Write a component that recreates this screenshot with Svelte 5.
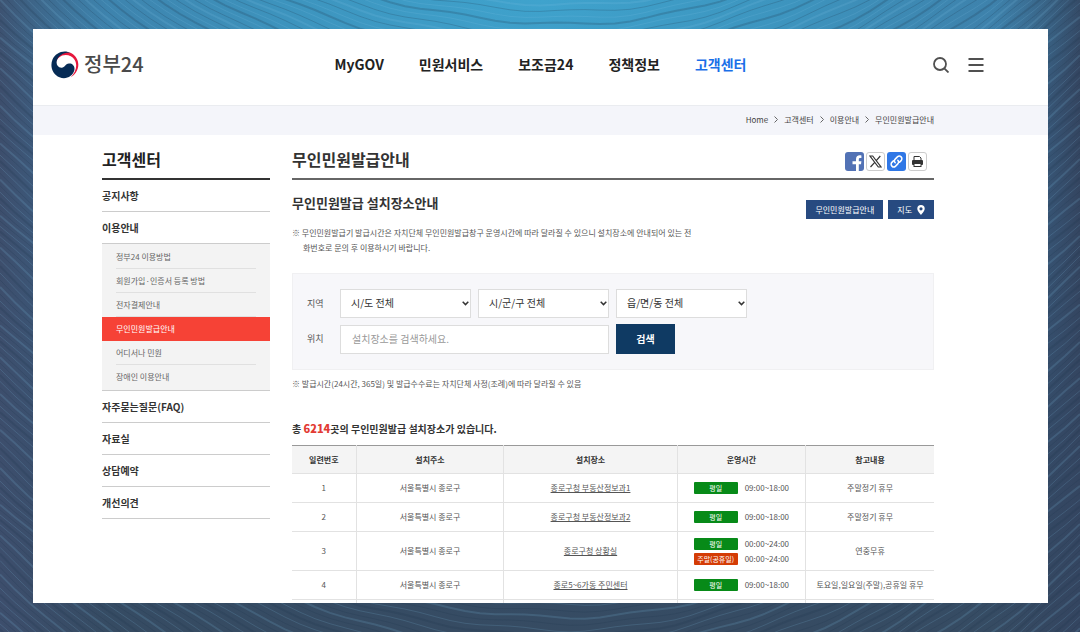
<script>
  const nav = ['MyGOV', '민원서비스', '보조금24', '정책정보', '고객센터'];
  const crumbs = ['Home', '고객센터', '이용안내', '무인민원발급안내'];
  const guide = ['정부24 이용방법', '회원가입·인증서 등록 방법', '전자결제안내', '무인민원발급안내', '어디서나 민원', '장애인 이용안내'];
  const menu = [
    { label: '공지사항' },
    { label: '이용안내', children: guide },
    { label: '자주묻는질문(FAQ)' },
    { label: '자료실' },
    { label: '상담예약' },
    { label: '개선의견' }
  ];
  const regions = [
    { name: '시/도', text: '시/도 전체' },
    { name: '시/군/구', text: '시/군/구 전체' },
    { name: '읍/면/동', text: '읍/면/동 전체' }
  ];
  const heads = ['일련번호', '설치주소', '설치장소', '운영시간', '참고내용'];
  const rows = [
    { no: 1, place: '종로구청 부동산정보과1', hours: [['평일', '09:00~18:00']], memo: '주말정기 휴무' },
    { no: 2, place: '종로구청 부동산정보과2', hours: [['평일', '09:00~18:00']], memo: '주말정기 휴무' },
    { no: 3, place: '종로구청 상황실', hours: [['평일', '00:00~24:00'], ['주말(공휴일)', '00:00~24:00']], memo: '연중무휴' },
    { no: 4, place: '종로5~6가동 주민센터', hours: [['평일', '09:00~18:00']], memo: '토요일,일요일(주말),공휴일 휴무' }
  ];
  // Grooves of the backdrop: nested bowls with a slight ripple.
  const grooves = Array.from({ length: 190 }, (_, i) => {
    const y = -460 + i * 6;
    let d = '';
    for (let x = 0; x <= 1080; x += 15) {
      const t = (x - 550) / 540;
      const py = y + 250 * (1 - t * t) + 1.5 * Math.sin(x / 17 + i * 0.4) + 2 * Math.sin(x / 61 + i * 0.25);
      d += (x ? 'L' : 'M') + x + ' ' + py.toFixed(1);
    }
    return d;
  });
</script>

<div class="backdrop">
  <svg class="texture" viewBox="0 0 1080 632" preserveAspectRatio="none" aria-hidden="true">
    {#each grooves as d, i}
      <path {d} fill="none" stroke={i % 2 ? '#20364f' : '#80c6e6'} stroke-opacity={i % 2 ? 0.22 : 0.17} stroke-width={i % 3 ? 1 : 2} />
    {/each}
  </svg>

  <div class="sheet">
    <header>
      <a class="logo" href="#home">
        <svg width="28" height="28" viewBox="0 0 28 28" aria-hidden="true">
          <path d="M3 8.5C6 1.800 14-1 20.500 2.200c7 3.700 9 13 4.200 19.500-1.200 1.800-3 3.400-5 4.500 5-4.800 7.200-11.800 4-17.200C20.500 3.400 12.500 2.400 8 6.500 6 8.300 5 10 5 12z" fill="#e6173c" />
          <path d="M20 2C13-1.800 4.500 1.500 1.500 8.500-1.500 16 2 23.500 8.500 26.300c6.500 2.500 13-.8 14.700-6.500 1.300-4.600-1.700-7.600-5.200-7.300-4.200.4-4 4.500-7.700 4.200-3.800-.3-5.600-3.900-4.300-7.600C8 3.600 14 .9 20 2z" fill="#062b55" />
        </svg>
        <span>정부24</span>
      </a>
      <nav aria-label="주메뉴">
        {#each nav as item, i}
          <a href="#menu" class:current={i === 4}>{item}</a>
        {/each}
      </nav>
      <div class="tools">
        <button aria-label="검색창 열기">
          <svg width="16" height="16" viewBox="0 0 16 16" fill="none" stroke="#505050" stroke-width="1.800"><circle cx="7" cy="7" r="6" /><path d="M11.300 11.300L15.500 15.500" /></svg>
        </button>
        <button aria-label="전체메뉴">
          <svg width="16" height="16" viewBox="0 0 16 16" fill="none" stroke="#505050" stroke-width="1.800"><path d="M.5 2h15M.5 8h15M.5 14h15" /></svg>
        </button>
      </div>
    </header>

    <div class="crumbs">
      {#each crumbs as c, i}
        {#if i}<svg width="4" height="7" viewBox="0 0 4 7" fill="none" stroke="#666" aria-hidden="true"><path d="M.5.5l3 3-3 3" /></svg>{/if}
        <a href="#crumb">{c}</a>
      {/each}
    </div>

    <div class="body">
      <aside>
        <h2>고객센터</h2>
        <ul class="menu">
          {#each menu as m}
            <li>
              <a href="#section">{m.label}</a>
              {#if m.children}
                <ul class="sub">
                  {#each m.children as s, i}
                    <li class:active={i === 3}><a href="#page">{s}</a></li>
                  {/each}
                </ul>
              {/if}
            </li>
          {/each}
        </ul>
      </aside>

      <main>
        <div class="title">
          <h1>무인민원발급안내</h1>
          <div class="share">
            <button class="fb" aria-label="페이스북">
              <svg width="19" height="19" viewBox="0 0 19 19"><path d="M11 19v-6.800H7.500V9.200H11V7.300C11 4.700 12.400 3.200 14.800 3.200c.8 0 1.300.1 1.600.2v2.700h-1.200c-1.100 0-1.400.6-1.400 1.400v1.700h2.600l-.4 3h-2.200V19z" fill="#fff" /></svg>
            </button>
            <button class="plain" aria-label="X">
              <svg width="17" height="17" viewBox="0 0 17 17" fill="none" stroke="#333"><path d="M3 3h2.700l8.300 11h-2.700zM13.300 3L9.300 7.600M7.500 9.600L3.500 14" stroke-width="1.200" /></svg>
            </button>
            <button class="link" aria-label="링크 복사">
              <svg width="19" height="19" viewBox="0 0 19 19" fill="none" stroke="#fff" stroke-width="1.500" stroke-linecap="round"><path d="M8.200 10.800a2.600 2.600 0 0 1 0-3.700l2.200-2.200a2.600 2.600 0 0 1 3.700 3.700l-1.500 1.500M10.800 8.200a2.600 2.600 0 0 1 0 3.700l-2.200 2.200a2.600 2.600 0 0 1-3.700-3.700l1.500-1.500" /></svg>
            </button>
            <button class="plain" aria-label="인쇄">
              <svg width="17" height="17" viewBox="0 0 17 17"><path d="M5 7V3.500h5.500L12 5v2" fill="#fff" stroke="#333" /><rect x="3" y="7" width="11" height="5" rx="1" fill="#333" /><rect x="5" y="10.500" width="7" height="3" fill="#fff" stroke="#333" /></svg>
            </button>
          </div>
        </div>

        <div class="subtitle">
          <h3>무인민원발급 설치장소안내</h3>
          <div class="links">
            <a href="#guide">무인민원발급안내</a>
            <a href="#map">지도 <svg width="8" height="10" viewBox="0 0 8 10" aria-hidden="true"><path fill-rule="evenodd" d="M4 0a3.700 3.700 0 0 1 3.700 3.800C7.700 6.200 4 10 4 10S.3 6.200.3 3.800A3.700 3.700 0 0 1 4 0zm0 2.200a1.600 1.600 0 1 0 0 3.200 1.600 1.600 0 0 0 0-3.200z" fill="#fff" /></svg></a>
          </div>
        </div>
        <p class="note lead">※ 무인민원발급기 발급시간은 자치단체 무인민원발급창구 운영시간에 따라 달라질 수 있으니 설치장소에 안내되어 있는 전<br />화번호로 문의 후 이용하시기 바랍니다.</p>

        <form class="filter" onsubmit={(e) => e.preventDefault()}>
          <label for="region0">지역</label>
          {#each regions as r, i}
            <select id={'region' + i} aria-label={r.name}><option>{r.text}</option></select>
          {/each}
          <label for="place">위치</label>
          <input id="place" type="text" placeholder="설치장소를 검색하세요." />
          <button type="submit">검색</button>
        </form>
        <p class="note">※ 발급시간(24시간, 365일) 및 발급수수료는 자치단체 사정(조례)에 따라 달라질 수 있음</p>

        <p class="total">총 <strong>6214</strong>곳의 무인민원발급 설치장소가 있습니다.</p>
        <table>
          <thead>
            <tr>{#each heads as h}<th scope="col">{h}</th>{/each}</tr>
          </thead>
          <tbody>
            {#each rows as r}
              <tr>
                <td>{r.no}</td>
                <td>서울특별시 종로구</td>
                <td><a href="#place">{r.place}</a></td>
                <td>
                  {#each r.hours as [kind, time], i}
                    <div class="hours"><span class="badge" class:holiday={i === 1}>{kind}</span><span>{time}</span></div>
                  {/each}
                </td>
                <td>{r.memo}</td>
              </tr>
            {/each}
            <tr>{#each heads as h}<td></td>{/each}</tr>
          </tbody>
        </table>
      </main>
    </div>
  </div>
</div>

<style>
  :global(body) { margin: 0; }
  * { box-sizing: border-box; }
  h1, h2, h3, p, ul { margin: 0; padding: 0; }
  ul { list-style: none; }
  a { color: inherit; text-decoration: none; }
  svg { display: block; }
  button, input, select { font: inherit; color: inherit; margin: 0; }
  button { border: 0; padding: 0; background: none; cursor: pointer; }

  .backdrop {
    position: relative;
    height: 100vh;
    padding: 29px 32px 29px 33px;
    background:
      radial-gradient(ellipse 52% 36% at 50% 0, #3fa3cd 0, #3d94be 45%, transparent 100%),
      linear-gradient(90deg, #3d4e6c 0, transparent 10%, transparent 92%, #344560 100%),
      linear-gradient(180deg, #3e78a2 0, #3b6c94 35%, #35506d 75%, #364b62 100%);
    font-family: "Noto Sans CJK KR", "Noto Sans", sans-serif;
    color: #333;
  }
  .texture { position: absolute; inset: 0; width: 100%; height: 100%; }
  .sheet { position: relative; height: 100%; overflow: hidden; background: #fff; }

  header {
    display: grid;
    grid-template-columns: 1fr auto 1fr;
    align-items: center;
    height: 76px;
    padding: 0 18px 4px;
  }
  .logo { display: flex; align-items: center; gap: 5px; font-size: 20px; line-height: 24px; font-weight: 500; color: #4a4a4a; }
  .logo span { padding-bottom: 2px; }
  nav { display: flex; gap: 35px; font-size: 14px; line-height: 20px; font-weight: 700; color: #222; padding-bottom: 2px; }
  nav .current { color: #1a6fe8; }
  .tools { display: flex; justify-content: flex-end; gap: 19px; margin-right: 46px; }

  .crumbs {
    display: flex;
    justify-content: flex-end;
    align-items: center;
    gap: 6px;
    height: 30px;
    padding: 0 114px 2px 0;
    border-top: 1px solid #eaecf0;
    background: #f4f5fa;
    font-size: 8px;
    line-height: 12px;
    color: #444;
  }

  .body { display: grid; grid-template-columns: 168px 1fr; gap: 22px; padding: 0 114px 0 69px; }

  aside h2 { height: 45px; border-bottom: 2px solid #333; font-size: 16px; line-height: 48px; color: #222; }
  .menu > li > a { display: block; border-bottom: 1px solid #ccc; font-size: 10px; line-height: 31px; font-weight: 700; }
  .sub { padding: 1px 0; border-bottom: 1px solid #ccc; background: #f3f3f3; font-size: 8px; line-height: 23px; color: #666; }
  .sub li { padding: 0 14px; }
  .sub a { display: block; border-bottom: 1px solid #e0e0e0; }
  .sub .active { background: #f64236; color: #fff; }
  .sub .active a, .sub li:last-child a { border-color: transparent; }

  .title { display: flex; justify-content: space-between; height: 45px; border-bottom: 2px solid #666; }
  h1 { font-size: 16px; line-height: 48px; }
  .share { display: flex; gap: 2px; margin-right: 7px; padding-top: 17px; }
  .share button { width: 19px; height: 19px; border-radius: 3px; overflow: hidden; }
  .share .fb { background: #5272b5; }
  .share .link { background: #2f77e6; }
  .share .plain { border: 1px solid #ccc; background: #fff; }

  .subtitle { display: flex; justify-content: space-between; align-items: flex-end; height: 39px; }
  h3 { font-size: 13px; line-height: 20px; padding-bottom: 6px; }
  .links { display: flex; gap: 5px; }
  .links a { display: flex; align-items: center; gap: 5px; height: 19px; padding: 0 9px; background: #274a80; color: #fff; font-size: 8px; line-height: 12px; }

  .note { font-size: 8px; line-height: 15px; color: #555; white-space: nowrap; }
  .lead { margin: 6px 0 18px; padding-left: 11px; text-indent: -11px; }

  .filter {
    display: grid;
    grid-template-columns: 26px repeat(3, 131px);
    gap: 6px 7px;
    align-items: center;
    margin-bottom: 6px;
    padding: 15px 14px;
    border: 1px solid #f0f0f2;
    background: #f7f7fa;
    font-size: 10px;
  }
  .filter label { font-size: 9px; line-height: 14px; color: #555; }
  .filter select, .filter input { width: 100%; height: 29px; border: 1px solid #ddd; border-radius: 0; background-color: #fff; }
  .filter select {
    appearance: none;
    padding: 0 12px 2px 10px;
    background-image: url("data:image/svg+xml,%3Csvg xmlns='http://www.w3.org/2000/svg' width='7' height='5' viewBox='0 0 7 5'%3E%3Cpath d='M.7.8l2.800 2.800L6.300.8' fill='none' stroke='%23333' stroke-width='1.500'/%3E%3C/svg%3E");
    background-repeat: no-repeat;
    background-position: right 1px center;
  }
  .filter input { grid-column: 2 / 4; padding: 0 11px 2px; }
  .filter input::placeholder { color: #999; }
  .filter button { width: 59px; height: 30px; padding-bottom: 2px; background: #0f3a63; color: #fff; font-weight: 700; }

  .total { margin: 28px 0 7px; font-size: 10px; line-height: 18px; font-weight: 700; }
  .total strong { font-size: 11px; color: #e23b34; }

  table { width: 100%; border-collapse: collapse; table-layout: fixed; border-top: 1px solid #999; font-size: 8px; line-height: 12px; text-align: center; }
  th, td { height: 29px; padding: 4px 0; border-bottom: 1px solid #e2e2e2; border-left: 1px solid #e2e2e2; white-space: nowrap; }
  th:first-child, td:first-child { border-left: 0; width: 10%; }
  th:nth-child(2) { width: 23%; }
  th:nth-child(3) { width: 27%; }
  th { height: 28px; background: #f4f4f4; }
  td { color: #555; }
  td a { text-decoration: underline; }
  .hours { display: flex; justify-content: center; align-items: center; gap: 7px; height: 15px; }
  .badge { width: 44px; height: 12px; border-radius: 1px; background: #078a18; color: #fff; font-size: 7px; line-height: 12px; }
  .badge.holiday { background: #d43c05; }
</style>
